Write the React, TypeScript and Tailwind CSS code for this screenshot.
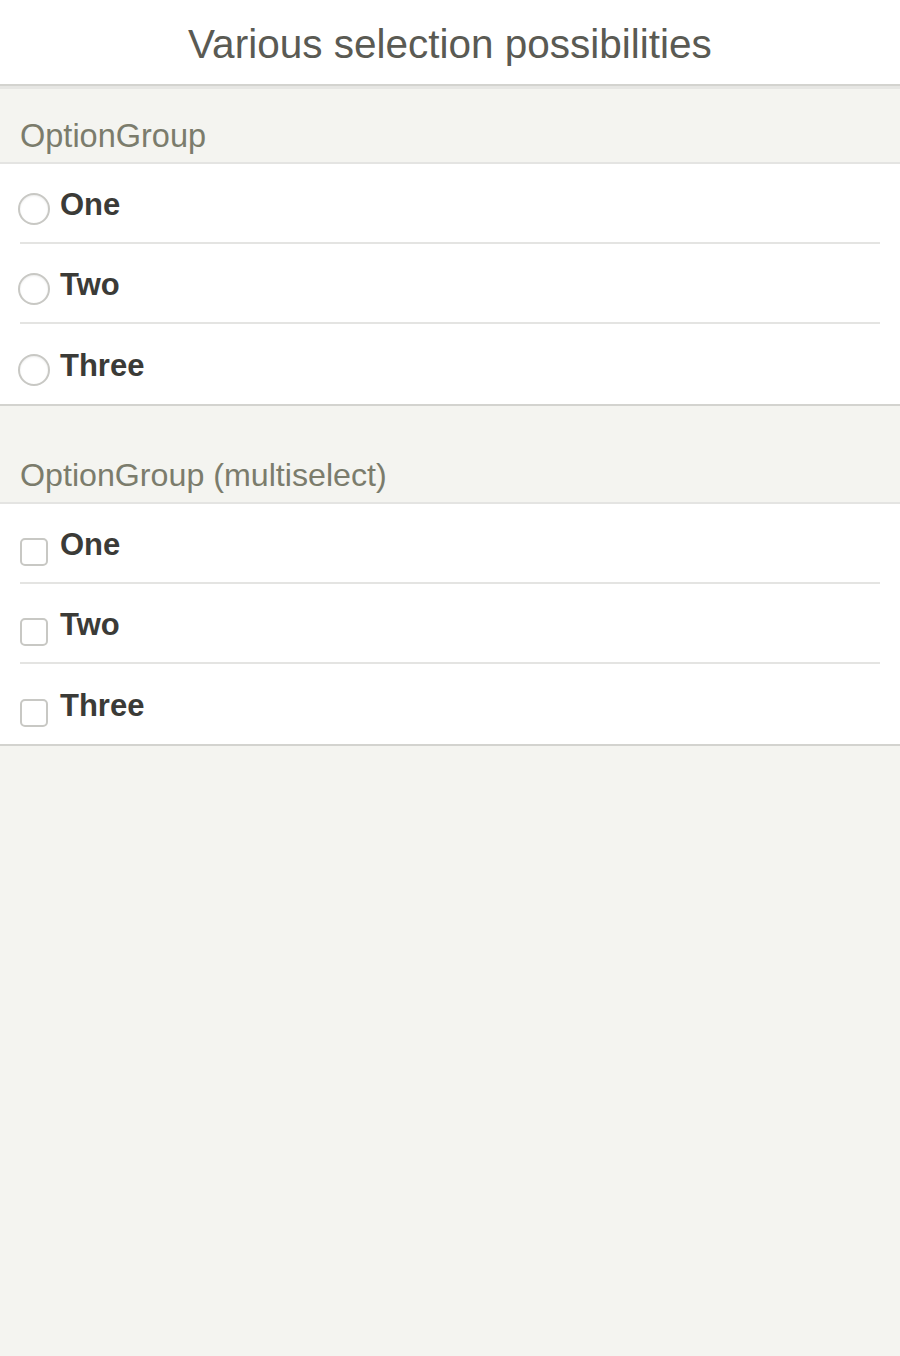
import { useState } from 'react';

const opciones = ['One', 'Two', 'Three'];

function Radio({ on }: { on: boolean }) {
  return (
    <span className="ml-[-2px] mt-[8px] flex h-[32px] w-[32px] shrink-0 items-center justify-center rounded-full border-2 border-[#c8c8c4] bg-white shadow-[inset_0_1px_2px_rgba(0,0,0,0.08)]">
      {on && <span className="h-[14px] w-[14px] rounded-full bg-[#5a5a52]" />}
    </span>
  );
}

function Check({ on }: { on: boolean }) {
  return (
    <span className="mt-[14px] flex h-[28px] w-[28px] shrink-0 items-center justify-center rounded-[5px] border-2 border-[#c8c8c4] bg-white">
      {on && (
        <svg viewBox="0 0 16 16" className="h-[18px] w-[18px]">
          <path d="M3 8.5l3.2 3.2L13 4.8" fill="none" stroke="#5a5a52" strokeWidth="2.2" />
        </svg>
      )}
    </span>
  );
}

export default function App() {
  const [uno, setUno] = useState('');
  const [varios, setVarios] = useState<string[]>([]);

  const toggle = (o: string) =>
    setVarios(varios.includes(o) ? varios.filter((x) => x !== o) : [...varios, o]);

  return (
    <div className="min-h-[1356px] bg-[#f4f4f0] font-['Liberation_Sans',Arial,sans-serif]">
      {/* Cabecera */}
      <div className="flex h-[86px] items-center justify-center border-b-2 border-[#d3d3cf] bg-white pt-[4px]">
        <h1 className="text-[40.5px] leading-none text-[#5a5a53]">Various selection possibilities</h1>
      </div>
      <div className="h-[3px] bg-[#e6e6e3]" />

      {/* Grupo simple */}
      <div className="px-[20px] pb-[7px] pt-[28px] text-[32.5px] leading-[38px] text-[#7b7c6c]">OptionGroup</div>
      <div className="border-y-2 border-y-[#e4e4e2] border-b-[#d3d3cf] bg-white pl-[20px]">
        {opciones.map((o, i) => (
          <button
            key={o}
            onClick={() => setUno(o)}
            className={`flex h-[80px] w-[860px] items-center gap-[10px] pt-[4px] text-left ${i < 2 ? 'border-b-2 border-[#e4e4e2]' : ''}`}
          >
            <Radio on={uno === o} />
            <span className="text-[31px] font-bold text-[#3b3b37]">{o}</span>
          </button>
        ))}
      </div>

      {/* Grupo multiple */}
      <div className="px-[20px] pb-[8px] pt-[50px] text-[32.2px] leading-[38px] text-[#7b7c6c]">OptionGroup (multiselect)</div>
      <div className="border-y-2 border-y-[#e4e4e2] border-b-[#d3d3cf] bg-white pl-[20px]">
        {opciones.map((o, i) => (
          <button
            key={o}
            onClick={() => toggle(o)}
            className={`flex h-[80px] w-[860px] items-center gap-[12px] pt-[4px] text-left ${i < 2 ? 'border-b-2 border-[#e4e4e2]' : ''}`}
          >
            <Check on={varios.includes(o)} />
            <span className="text-[31px] font-bold text-[#3b3b37]">{o}</span>
          </button>
        ))}
      </div>
    </div>
  );
}
